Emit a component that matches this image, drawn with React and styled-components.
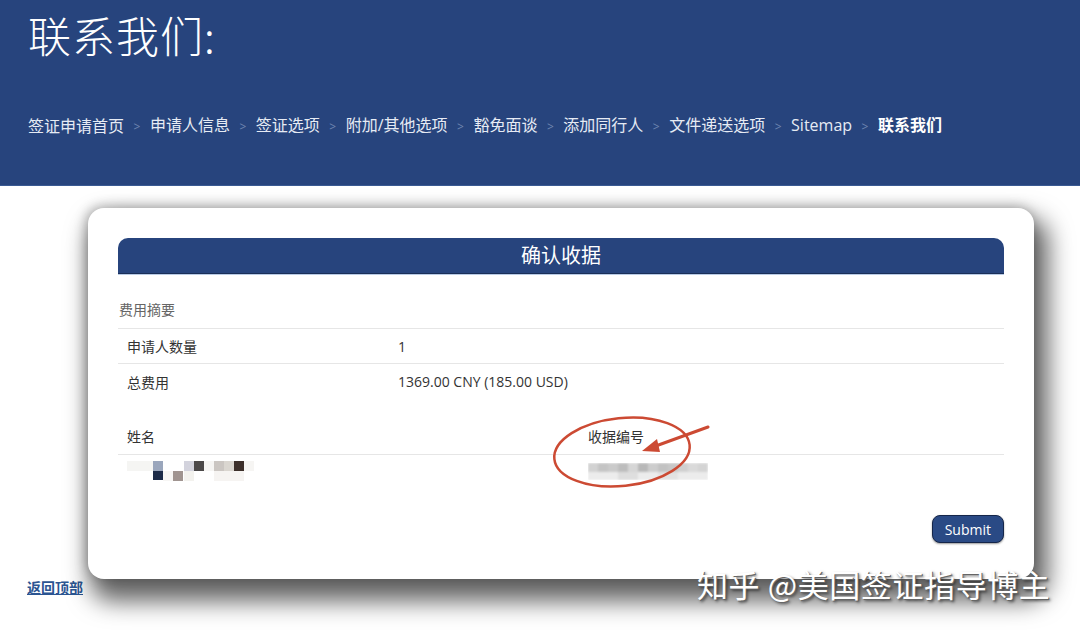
import styled, { createGlobalStyle } from 'styled-components';

const GlobalStyle = createGlobalStyle`
  body {
    margin: 0;
    background: #fff;
    font-family: "Open Sans", "Noto Sans CJK SC", sans-serif;
    color: #333;
  }
`;

const blue = '#27447d';

const crumbs = [
  '签证申请首页',
  '申请人信息',
  '签证选项',
  '附加/其他选项',
  '豁免面谈',
  '添加同行人',
  '文件递送选项',
  'Sitemap',
  '联系我们'
];

const nameBlocks = [
  [0, 2, 26, 10, '#f5f5f3'],
  [26, 2, 10, 10, '#9aa6bc'],
  [26, 12, 10, 9, '#1c2b48'],
  [36, 12, 10, 10, '#f7f6f4'],
  [46, 12, 10, 10, '#a09490'],
  [57, 2, 10, 10, '#d3d3dd'],
  [67, 2, 10, 10, '#4b4848'],
  [57, 12, 10, 10, '#f3f2ee'],
  [77, 2, 10, 10, '#f6f5f3'],
  [87, 2, 10, 10, '#cbc6c2'],
  [97, 2, 10, 10, '#dad6d0'],
  [107, 2, 10, 10, '#3c2f2a'],
  [87, 12, 30, 10, '#f6f4f2'],
  [117, 2, 10, 10, '#f6f5f3']
];

const receiptBlocks = [
  [0, 0, 10, 9, '#d2d2d2'],
  [10, 0, 10, 9, '#c4c4c4'],
  [20, 0, 10, 9, '#cacaca'],
  [30, 0, 10, 9, '#bdbdbd'],
  [40, 0, 10, 9, '#d6d6d6'],
  [50, 0, 10, 9, '#b8b8b8'],
  [60, 0, 10, 9, '#cdcdcd'],
  [70, 0, 10, 9, '#c2c2c2'],
  [80, 0, 10, 9, '#c8c8c8'],
  [90, 0, 10, 9, '#d0d0d0'],
  [100, 0, 10, 9, '#dadada'],
  [110, 0, 10, 9, '#d4d4d4'],
  [0, 9, 120, 8, '#ececec'],
  [30, 9, 20, 8, '#dedede'],
  [70, 9, 20, 8, '#e2e2e2']
];

const Page = styled.div`
  position: relative;
  min-height: 631px;
`;

const Header = styled.header`
  background: ${blue};
  height: 186px;
  box-sizing: border-box;
  padding: 6px 28px 0;
  display: flex;
  flex-direction: column;
  border-bottom: 1px solid #3a5a93;
`;

const PageTitle = styled.h1`
  margin: 0;
  color: #fff;
  font-family: "Noto Sans CJK SC", serif;
  font-weight: 300;
  font-size: 43px;
  line-height: 56px;
  letter-spacing: 1px;
`;

const Crumbs = styled.nav`
  display: flex;
  align-items: center;
  margin-top: 52px;
  font-size: 16px;
  line-height: 22px;
  color: #eef1f7;
`;

const Crumb = styled.span`
  font-weight: ${p => (p.$current ? 700 : 400)};
  color: ${p => (p.$current ? '#fff' : '#e6ebf4')};
`;

const Sep = styled.span`
  color: #6f86b1;
  font-size: 12px;
  margin: 0 9.5px;
`;

const Main = styled.main`
  padding: 22px 0 0 88px;
`;

const Card = styled.section`
  position: relative;
  width: 946px;
  box-sizing: border-box;
  background: #fff;
  border-radius: 16px;
  padding: 30px 30px 36px;
  box-shadow: 8px 16px 24px 6px rgba(0, 0, 0, 0.62),
    -2px -2px 12px rgba(0, 0, 0, 0.25);
`;

const TitleBar = styled.h2`
  margin: 0;
  background: ${blue};
  color: #fff;
  text-align: center;
  font-weight: 400;
  font-size: 20px;
  line-height: 35px;
  border-radius: 10px 10px 0 0;
  border-bottom: 1px solid #1b2f58;
  box-shadow: 0 1px 0 #b9cbe6;
`;

const SectionLabel = styled.div`
  margin-top: 26px;
  padding: 0 1px 8px;
  font-size: 14px;
  line-height: 20px;
  color: #666;
  border-bottom: 1px solid #e6e6e6;
`;

const Row = styled.div`
  display: grid;
  grid-template-columns: ${p => p.$cols};
  align-items: ${p => (p.$head ? 'end' : 'center')};
  box-sizing: border-box;
  padding-bottom: ${p => (p.$head ? 8 : 0)}px;
  height: ${p => p.$h || 35}px;
  font-size: 14px;
  color: #333;
  border-bottom: ${p => (p.$line ? '1px solid #e6e6e6' : 'none')};
`;

const Cell = styled.div`
  padding: 0 9px;
  display: flex;
  align-items: center;
`;

const Pixel = styled.svg`
  display: block;
`;

const Actions = styled.div`
  display: flex;
  justify-content: flex-end;
  margin-top: 28px;
`;

const SubmitButton = styled.button`
  background: #2a4a85;
  color: #fff;
  font-family: "Open Sans", sans-serif;
  font-size: 14px;
  padding: 0 12px;
  height: 28px;
  border: 1px solid #15264a;
  border-radius: 8px;
  box-shadow: 0 1px 2px rgba(0, 0, 0, 0.4);
`;

const Annotation = styled.svg`
  position: absolute;
  left: 450px;
  top: 195px;
  overflow: visible;
`;

const Footer = styled.footer`
  padding: 0 27px;
  font-size: 14px;
  line-height: 18px;
`;

const BackToTop = styled.a`
  font-weight: 700;
  color: #2b5592;
  text-decoration: underline;
`;

const Watermark = styled.div`
  position: absolute;
  left: 697px;
  top: 565px;
  font-family: "Noto Sans CJK SC", sans-serif;
  font-size: 31px;
  line-height: 38px;
  letter-spacing: 0.6px;
  color: #fff;
  text-shadow: 1px 1px 0 #666, 2px 2px 3px rgba(0, 0, 0, 0.6);
`;

function Blocks({ blocks, width, height, blur }) {
  return (
    <Pixel width={width} height={height}>
      {blur && (
        <filter id="b">
          <feGaussianBlur stdDeviation="0.8" />
        </filter>
      )}
      <g filter={blur ? 'url(#b)' : undefined}>
        {blocks.map(([x, y, w, h, c], i) => (
          <rect key={i} x={x} y={y} width={w} height={h} fill={c} />
        ))}
      </g>
    </Pixel>
  );
}

export default function App() {
  return (
    <Page>
      <GlobalStyle />
      <Header>
        <PageTitle>联系我们:</PageTitle>
        <Crumbs>
          {crumbs.map((c, i) => (
            <span key={c}>
              {i > 0 && <Sep>&gt;</Sep>}
              <Crumb $current={i === crumbs.length - 1}>{c}</Crumb>
            </span>
          ))}
        </Crumbs>
      </Header>
      <Main>
        <Card>
          <TitleBar>确认收据</TitleBar>
          <SectionLabel>费用摘要</SectionLabel>
          <Row $cols="271px 1fr" $line>
            <Cell>申请人数量</Cell>
            <Cell>1</Cell>
          </Row>
          <Row $cols="271px 1fr">
            <Cell>总费用</Cell>
            <Cell>1369.00 CNY (185.00 USD)</Cell>
          </Row>
          <Row $cols="461px 1fr" $h={56} $line $head>
            <Cell>姓名</Cell>
            <Cell>收据编号</Cell>
          </Row>
          <Row $cols="461px 1fr" $h={32}>
            <Cell>
              <Blocks blocks={nameBlocks} width={130} height={24} />
            </Cell>
            <Cell>
              <Blocks blocks={receiptBlocks} width={120} height={17} blur />
            </Cell>
          </Row>
          <Actions>
            <SubmitButton>Submit</SubmitButton>
          </Actions>
          <Annotation width="200" height="100" viewBox="0 0 200 100">
            <ellipse
              cx="84"
              cy="49"
              rx="68"
              ry="34"
              fill="none"
              stroke="#cc4a33"
              strokeWidth="2.5"
              transform="rotate(-6 84 49)"
            />
            <line x1="170" y1="24" x2="115" y2="44" stroke="#cc4a33" strokeWidth="3" strokeLinecap="round" />
            <polygon points="104,48 119,36 122,49" fill="#cc4a33" />
          </Annotation>
        </Card>
      </Main>
      <Footer>
        <BackToTop href="#top">返回顶部</BackToTop>
      </Footer>
      <Watermark>知乎 @美国签证指导博主</Watermark>
    </Page>
  );
}
